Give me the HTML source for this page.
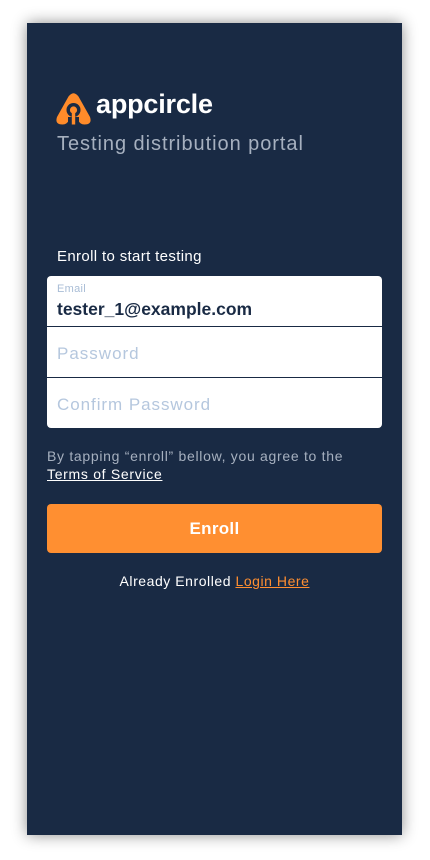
<!DOCTYPE html>
<html><head><meta charset="utf-8"><style>
html,body{margin:0;padding:0;width:430px;height:860px;background:#fff;overflow:hidden;font-family:"Liberation Sans",Helvetica,Arial,sans-serif}
.panel{position:absolute;left:27px;top:23px;width:375px;height:812px;background:#192a44;box-shadow:0 0 14px rgba(0,0,0,.45)}
.abs{position:absolute}
</style></head><body>
<div class="panel">
  <svg class="abs" style="left:29px;top:70px" width="35" height="32" viewBox="0 0 35 32">
    <path fill="#ff8b2a" d="M12.5 3.5 Q17.5 -3 22.5 3.5 L34 24 Q36.5 31.5 28.5 31.5 Q24 31.5 22 27 L13 27 Q11 31.5 6.5 31.5 Q-1.5 31.5 1 24 Z"/>
    <circle cx="17.5" cy="17" r="7" fill="#192a44"/>
    <path fill="#192a44" d="M12 24 h11 v8 h-11z"/>
    <circle cx="17.5" cy="17" r="3.6" fill="#ff8b2a"/>
    <path fill="#ff8b2a" d="M15.8 18 h3.4 v13.5 h-3.4z"/>
  </svg>
  <div class="abs" style="left:69px;top:66px;font-size:27px;font-weight:bold;color:#fff;letter-spacing:-0.2px">appcircle</div>
  <div class="abs" style="left:30px;top:110px;font-size:20px;color:#a6b0bf;letter-spacing:0.95px">Testing distribution portal</div>
  <div class="abs" style="left:30px;top:225px;font-size:15px;color:#fff;letter-spacing:0.35px">Enroll to start testing</div>
  <div class="abs" style="left:20px;top:253px;width:335px;height:152px;background:#fff;border-radius:4px;overflow:hidden">
    <div class="abs" style="left:10px;top:7px;font-size:11px;color:#a9bdd6;letter-spacing:0.3px">Email</div>
    <div class="abs" style="left:10px;top:23px;font-size:17.5px;font-weight:bold;color:#192a44">tester_1@example.com</div>
    <div class="abs" style="left:0;top:50px;width:335px;height:1px;background:#192a44"></div>
    <div class="abs" style="left:10px;top:68px;font-size:17px;color:#b5c7de;letter-spacing:1px">Password</div>
    <div class="abs" style="left:0;top:101px;width:335px;height:1px;background:#192a44"></div>
    <div class="abs" style="left:10px;top:119px;font-size:17px;color:#b5c7de;letter-spacing:0.95px">Confirm Password</div>
  </div>
  <div class="abs" style="left:20px;top:424px;font-size:14px;color:#a6b0bf;line-height:18px;letter-spacing:0.7px">By tapping “enroll” bellow, you agree to the<br><span style="color:#fff;text-decoration:underline">Terms of Service</span></div>
  <div class="abs" style="left:20px;top:481px;width:335px;height:49px;background:#ff8f31;border-radius:4px;color:#fff;font-size:17px;font-weight:bold;text-align:center;line-height:49px;letter-spacing:0.3px">Enroll</div>
  <div class="abs" style="left:0;top:550px;width:375px;text-align:center;font-size:14px;color:#fff;letter-spacing:0.55px">Already Enrolled <span style="color:#ff8f31;text-decoration:underline">Login Here</span></div>
</div>
</body></html>
